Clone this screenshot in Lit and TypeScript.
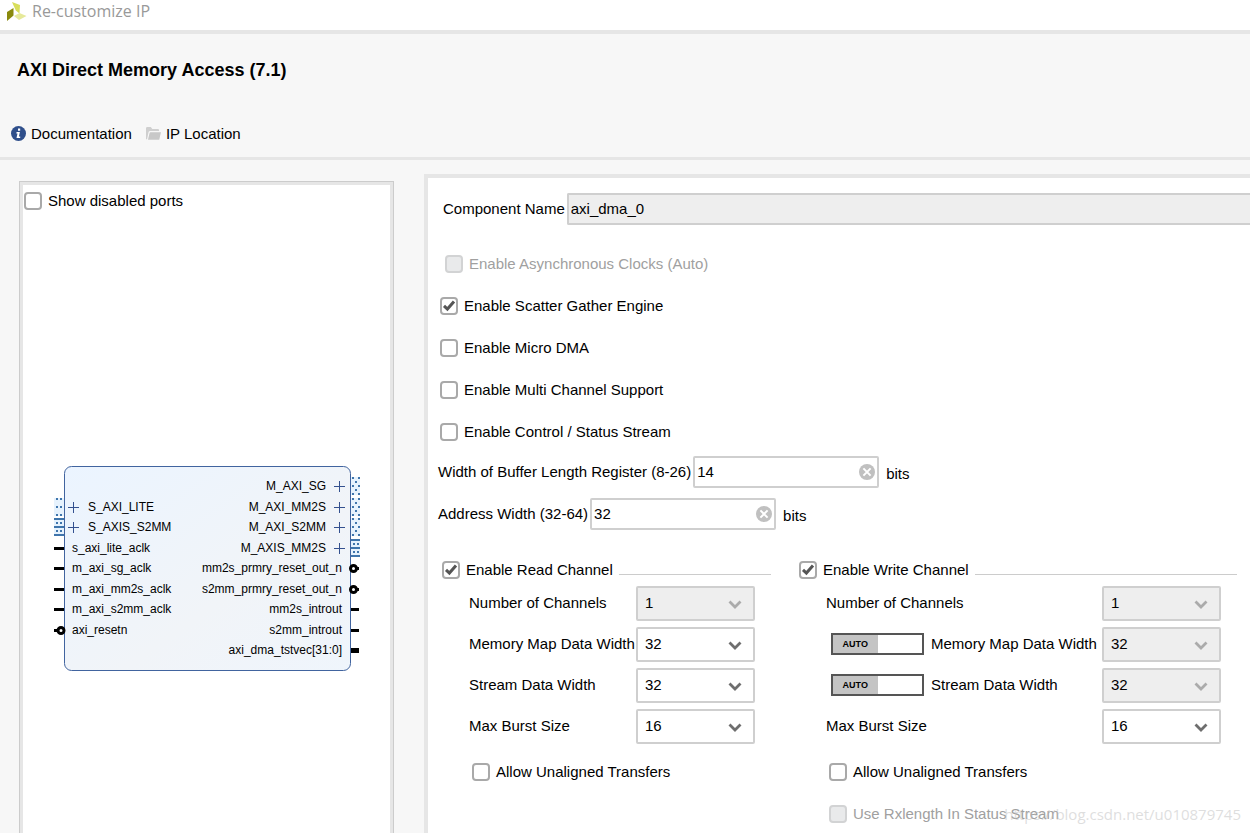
import { LitElement, html, svg, css, nothing } from "lit";
import { customElement, property, state } from "lit/decorators.js";

const sharedText = css`
  :host,
  input,
  select,
  button {
    font-family: "Liberation Sans", Arial, sans-serif;
    font-size: 15px;
    line-height: 18px;
    color: #000;
  }
`;

/* Tick box with its label. */
@customElement("ip-check")
class IpCheck extends LitElement {
  @property() label = "";
  @property({ type: Boolean }) checked = false;
  @property({ type: Boolean }) disabled = false;

  static styles = [
    sharedText,
    css`
      :host {
        display: flex;
      }
      .row {
        display: flex;
        align-items: center;
        gap: 6px;
        white-space: nowrap;
      }
      .row.off {
        color: #a0a0a0;
      }
      .box {
        display: grid;
        width: 18px;
        height: 18px;
      }
      .box > * {
        grid-area: 1 / 1;
      }
      input {
        appearance: none;
        box-sizing: border-box;
        width: 18px;
        height: 18px;
        margin: 0;
        border: 2px solid #a9a9a9;
        border-radius: 4px;
        background: #fff;
      }
      input:disabled {
        border-color: #d2d3d4;
        background: #e9eaeb;
      }
      svg {
        pointer-events: none;
      }
    `,
  ];

  private toggle(e: Event) {
    this.checked = (e.target as HTMLInputElement).checked;
  }

  render() {
    return html`<label class="row ${this.disabled ? "off" : ""}">
      <span class="box">
        <input type="checkbox" .checked=${this.checked} ?disabled=${this.disabled} @change=${this.toggle} />
        ${this.checked
          ? html`<svg width="18" height="18" viewBox="0 0 18 18">
              <path d="M4 8.9 L7.4 12.1 L14 4.6" fill="none" stroke="#555" stroke-width="3" />
            </svg>`
          : nothing}
      </span>
      <span>${this.label}</span>
    </label>`;
  }
}

/* Labelled drop-down, optionally led by an AUTO switch. */
@customElement("ip-choice")
class IpChoice extends LitElement {
  @property() label = "";
  @property() value = "";
  @property({ type: Boolean }) disabled = false;
  @property({ type: Boolean }) auto = false;

  static styles = [
    sharedText,
    css`
      :host {
        display: flex;
        align-items: center;
        justify-content: space-between;
      }
      .lead {
        display: flex;
        align-items: center;
        gap: 7px;
        padding-bottom: 1px;
        white-space: nowrap;
      }
      .switch {
        box-sizing: border-box;
        display: flex;
        width: 93px;
        height: 22px;
        margin-left: 5px;
        padding: 0;
        border: 2px solid #555;
        background: #fff;
      }
      .knob {
        width: 50%;
        height: 100%;
        background: #c4c4c4;
        font-size: 9px;
        line-height: 18px;
        font-weight: bold;
        text-align: center;
      }
      .pick {
        display: grid;
        align-items: center;
        width: 119px;
      }
      .pick > * {
        grid-area: 1 / 1;
      }
      select {
        appearance: none;
        box-sizing: border-box;
        width: 100%;
        height: 35px;
        padding: 0 30px 1px 7px;
        border: 2px solid #cfcfcf;
        border-radius: 2px;
        background: #fff;
      }
      select:disabled {
        background: #eee;
        opacity: 1;
      }
      svg {
        justify-self: end;
        margin-right: 13px;
        pointer-events: none;
      }
    `,
  ];

  render() {
    return html`
      <span class="lead">
        ${this.auto
          ? html`<button class="switch" type="button" role="switch" aria-checked="true" aria-label="${this.label} auto">
              <span class="knob">AUTO</span>
            </button>`
          : nothing}
        <label for="pick">${this.label}</label>
      </span>
      <span class="pick">
        <select id="pick" ?disabled=${this.disabled}>
          <option>${this.value}</option>
        </select>
        <svg width="14" height="12" viewBox="0 0 14 12">
          <path d="M1.5 3.5 L7 9 L12.5 3.5" fill="none" stroke=${this.disabled ? "#ababab" : "#6e6e6e"} stroke-width="2.8" />
        </svg>
      </span>
    `;
  }
}

/* Labelled number box with a clear button and a unit. */
@customElement("ip-number")
class IpNumber extends LitElement {
  @property() label = "";
  @property() value = "";

  static styles = [
    sharedText,
    css`
      :host {
        display: flex;
        align-items: center;
        gap: 2px;
        white-space: nowrap;
      }
      .box {
        box-sizing: border-box;
        display: flex;
        align-items: center;
        width: 186px;
        height: 32px;
        padding: 0 2px;
        border: 2px solid #cfcfcf;
        border-radius: 2px;
        background: #fff;
      }
      input {
        flex: 1;
        min-width: 0;
        padding: 0;
        border: 0;
        outline: 0;
        background: none;
      }
      button {
        display: flex;
        padding: 0;
        border: 0;
        background: none;
      }
      .unit {
        padding: 4px 0 0 5px;
      }
    `,
  ];

  private clear() {
    this.value = "";
  }

  render() {
    return html`
      <label for="num">${this.label}</label>
      <span class="box">
        <input id="num" type="text" .value=${this.value} />
        <button type="button" aria-label="Clear" @click=${this.clear}>
          <svg width="16" height="16" viewBox="0 0 16 16">
            <circle cx="8" cy="8" r="8" fill="#c0c0c0" />
            <path d="M4.4 4.4 L11.6 11.6 M11.6 4.4 L4.4 11.6" stroke="#fff" stroke-width="2" />
          </svg>
        </button>
      </span>
      <span class="unit">bits</span>
    `;
  }
}

/* Block symbol: inputs on the left edge, outputs on the right edge. */
type Port = { name: string; y: number; kind: "memory" | "lite" | "stream" | "pin" | "inverted" | "vector" };

const INPUTS: Port[] = [
  { name: "S_AXI_LITE", y: 42, kind: "lite" },
  { name: "S_AXIS_S2MM", y: 62, kind: "stream" },
  { name: "s_axi_lite_aclk", y: 83, kind: "pin" },
  { name: "m_axi_sg_aclk", y: 103, kind: "pin" },
  { name: "m_axi_mm2s_aclk", y: 124, kind: "pin" },
  { name: "m_axi_s2mm_aclk", y: 144, kind: "pin" },
  { name: "axi_resetn", y: 165, kind: "inverted" },
];

const OUTPUTS: Port[] = [
  { name: "M_AXI_SG", y: 21, kind: "memory" },
  { name: "M_AXI_MM2S", y: 42, kind: "memory" },
  { name: "M_AXI_S2MM", y: 62, kind: "memory" },
  { name: "M_AXIS_MM2S", y: 83, kind: "stream" },
  { name: "mm2s_prmry_reset_out_n", y: 103, kind: "inverted" },
  { name: "s2mm_prmry_reset_out_n", y: 124, kind: "inverted" },
  { name: "mm2s_introut", y: 144, kind: "pin" },
  { name: "s2mm_introut", y: 165, kind: "pin" },
  { name: "axi_dma_tstvec[31:0]", y: 185, kind: "vector" },
];

@customElement("ip-symbol")
class IpSymbol extends LitElement {
  static styles = css`
    :host {
      display: block;
    }
    svg {
      display: block;
      margin: 0 auto;
    }
    text {
      font-family: "Liberation Sans", Arial, sans-serif;
      font-size: 12px;
      fill: #000;
    }
    .end {
      text-anchor: end;
    }
    .body {
      stroke: #41649f;
    }
    .wire {
      fill: #3f75ac;
    }
    .halo {
      fill: #e6f2fd;
    }
    .plus {
      fill: none;
      stroke: #34518f;
    }
    .ring {
      fill: #fff;
      stroke: #000;
      stroke-width: 3;
    }
  `;

  private dot(x: number, y: number) {
    return svg`<rect class="wire" x=${x} y=${y} width="2" height="2" />`;
  }

  private stub({ y, kind }: Port, left: boolean) {
    const x = left ? 2 : 299;
    const w = left ? 10 : 9;
    const dx = left ? 4 : 301;
    switch (kind) {
      case "lite":
        return svg`<rect class="halo" x=${x} y=${y - 9} width=${w} height="18" />
          ${[-9, -1, 7].map((d) => [this.dot(dx, y + d), this.dot(dx + 4, y + d)])}`;
      case "memory":
        return svg`<rect class="halo" x=${x} y=${y - 9} width=${w} height="18" />
          ${[-9, -1, 7].map((d) => [this.dot(300, y + d), this.dot(306, y + d)])}
          ${[-5, 3].map((d) => this.dot(303, y + d))}`;
      case "stream":
        return svg`<rect class="halo" x=${x} y=${y - 9} width=${w} height="18" />
          ${[-9, -1, 7].map((d) => svg`<rect class="wire" x=${x} y=${y + d} width=${w} height="2" />`)}
          ${[-5, 3].map((d) => [this.dot(dx, y + d), this.dot(dx + 4, y + d)])}`;
      case "vector":
        return svg`<rect x=${x} y=${y - 2} width=${w - 1} height="5" />`;
      case "inverted":
        return svg`<rect x=${x} y=${y - 1} width=${w - 1} height="3" />
          <circle class="ring" cx=${left ? 9 : 301.5} cy=${y + 0.5} r="3" />`;
      default:
        return svg`<rect x=${x} y=${y - 1} width=${left ? w : w - 1} height="3" />`;
    }
  }

  private port(p: Port, left: boolean) {
    const bus = p.kind === "memory" || p.kind === "lite" || p.kind === "stream";
    const px = left ? 21.5 : 287.5;
    const tx = left ? (bus ? 36 : 20) : bus ? 274 : 290;
    return svg`
      ${this.stub(p, left)}
      ${bus ? svg`<path class="plus" d="M${px - 5.5} ${p.y + 0.5} h11 M${px} ${p.y - 5} v11" />` : nothing}
      <text class=${left ? "" : "end"} x=${tx} y=${p.y + 4}>${p.name}</text>
    `;
  }

  render() {
    return html`<svg width="309" height="207" viewBox="0 0 309 207" role="img" aria-label="AXI DMA block symbol">
      <defs>
        <linearGradient id="fade" x1="0" y1="0" x2="1" y2="1">
          <stop offset="0" stop-color="#ebf4ff" />
          <stop offset="0.6" stop-color="#f1f4f8" />
          <stop offset="1" stop-color="#eff5fc" />
        </linearGradient>
      </defs>
      <rect class="body" x="12.5" y="1.5" width="286" height="204" rx="7" fill="url(#fade)" />
      ${INPUTS.map((p) => this.port(p, true))} ${OUTPUTS.map((p) => this.port(p, false))}
    </svg>`;
  }
}

@customElement("app-root")
class AppRoot extends LitElement {
  @state() private name = "axi_dma_0";

  static styles = [
    sharedText,
    css`
      :host {
        position: relative;
        display: flex;
        flex-direction: column;
        min-height: 100vh;
        overflow: hidden;
        background: #f7f7f7;
      }
      .titlebar {
        box-sizing: border-box;
        display: flex;
        align-items: center;
        gap: 5px;
        height: 34px;
        padding: 0 6px 8px;
        border-bottom: 4px solid #e6e6e6;
        background: #fff;
        font-family: "Open Sans", "Noto Sans", sans-serif;
        font-size: 16px;
        color: #999;
      }
      header {
        padding: 24px 11px 14px;
        border-bottom: 3px solid #e6e6e6;
      }
      h1 {
        margin: 0 0 42px;
        padding-left: 6px;
        font-size: 18px;
        line-height: 24px;
      }
      nav {
        display: flex;
        gap: 14px;
      }
      .link {
        display: flex;
        align-items: center;
        gap: 5px;
        height: 19px;
        color: inherit;
        text-decoration: none;
      }
      .work {
        flex: 1;
        display: grid;
        grid-template-columns: minmax(330px, 375px) minmax(0, 1fr);
        column-gap: 30px;
        padding: 14px 0 0 19px;
      }
      .preview {
        margin-top: 7px;
        border: 1px solid #ccc;
        border-bottom: 0;
        background: #fff;
      }
      .canvas {
        box-sizing: border-box;
        height: 100%;
        border: 3px solid #e6e6e6;
        border-bottom: 0;
        padding: 7px 1px 0;
      }
      ip-symbol {
        margin-top: 255px;
      }
      .options {
        box-sizing: border-box;
        padding: 15px 0 10px 10px;
        border: solid #e6e6e6;
        border-width: 4px 0 0 4px;
        background: #fff;
      }
      .name {
        display: flex;
        align-items: center;
        gap: 2px;
        padding-left: 5px;
        white-space: nowrap;
      }
      .name input {
        box-sizing: border-box;
        flex: 1;
        min-width: 0;
        height: 32px;
        padding: 0 2px 2px;
        border: 2px solid #cfcfcf;
        border-right: 0;
        border-radius: 2px 0 0 2px;
        background: #eee;
      }
      .checks {
        display: grid;
        gap: 24px;
        margin: 30px 0 15px;
        padding-left: 2px;
      }
      .indent {
        padding-left: 5px;
      }
      .numbers {
        display: grid;
        gap: 10px;
      }
      .channels {
        display: grid;
        grid-template-columns: 329px 1fr;
        gap: 28px;
        margin-top: 31px;
        padding: 0 13px 0 4px;
      }
      .heading {
        display: flex;
        gap: 6px;
        margin-bottom: 7px;
      }
      .rule {
        flex: 1;
        height: 1px;
        margin-top: 13px;
        background: #ccc;
      }
      .fields {
        display: grid;
        gap: 6px;
        padding: 0 16px 0 27px;
      }
      .extras {
        display: grid;
        gap: 24px;
        margin-top: 19px;
        padding-left: 30px;
      }
      .mark {
        position: absolute;
        right: 9px;
        bottom: 7px;
        font-family: "Open Sans", "Noto Sans", sans-serif;
        font-size: 15px;
        line-height: 24px;
        color: rgba(190, 190, 190, 0.5);
        pointer-events: none;
      }
    `,
  ];

  render() {
    return html`
      <div class="titlebar">
        <svg width="21" height="21" viewBox="0 0 21 21">
          <path d="M6 1 L14 4 L13.5 12.5 L9.8 9.5 Z" fill="#d8de5a" />
          <path d="M1 11 L7.5 7 L7.5 14.5 L1 20 Z" fill="#8a8a0c" />
          <path d="M8 15 L13.5 12 L20.5 15 L13 19 Z" fill="#e6e99a" />
        </svg>
        <span>Re-customize IP</span>
      </div>

      <header>
        <h1>AXI Direct Memory Access (7.1)</h1>
        <nav>
          <a class="link" href="#documentation">
            <svg width="15" height="15" viewBox="0 0 15 15">
              <circle cx="7.5" cy="7.5" r="7.5" fill="#2f4f8b" />
              <path d="M7 2.5 h2.2 v2.2 h-2.2 Z M5.6 6 h3.3 l-1 4.600 h1.3 v1.4 h-3.700 l1 -4.600 h-1.200 Z" fill="#fff" />
            </svg>
            Documentation
          </a>
          <a class="link" href="#location">
            <svg width="15" height="13" viewBox="0 0 15 13">
              <path d="M0 12 V1.2 Q0 0 1.2 0 H4.8 L6.3 2 H12 Q13 2 13 3 V4 H4.2 Q3 4 2.6 5 L1 12.5 Z" fill="#cfcfcf" />
              <path d="M4.3 5.2 H15 L13.2 12.8 H2 L3.6 5.8 Z" fill="#c8c8c8" />
            </svg>
            IP Location
          </a>
        </nav>
      </header>

      <div class="work">
        <section class="preview">
          <div class="canvas">
            <ip-check label="Show disabled ports"></ip-check>
            <ip-symbol></ip-symbol>
          </div>
        </section>

        <main class="options">
          <div class="name">
            <label for="component">Component Name</label>
            <input id="component" type="text" readonly .value=${this.name} />
          </div>

          <div class="checks">
            <ip-check class="indent" label="Enable Asynchronous Clocks (Auto)" disabled></ip-check>
            <ip-check label="Enable Scatter Gather Engine" checked></ip-check>
            <ip-check label="Enable Micro DMA"></ip-check>
            <ip-check label="Enable Multi Channel Support"></ip-check>
            <ip-check label="Enable Control / Status Stream"></ip-check>
          </div>

          <div class="numbers">
            <ip-number label="Width of Buffer Length Register (8-26)" value="14"></ip-number>
            <ip-number label="Address Width (32-64)" value="32"></ip-number>
          </div>

          <div class="channels">
            <section>
              <div class="heading">
                <ip-check label="Enable Read Channel" checked></ip-check>
                <span class="rule"></span>
              </div>
              <div class="fields">
                <ip-choice label="Number of Channels" value="1" disabled></ip-choice>
                <ip-choice label="Memory Map Data Width" value="32"></ip-choice>
                <ip-choice label="Stream Data Width" value="32"></ip-choice>
                <ip-choice label="Max Burst Size" value="16"></ip-choice>
              </div>
              <div class="extras">
                <ip-check label="Allow Unaligned Transfers"></ip-check>
              </div>
            </section>
            <section>
              <div class="heading">
                <ip-check label="Enable Write Channel" checked></ip-check>
                <span class="rule"></span>
              </div>
              <div class="fields">
                <ip-choice label="Number of Channels" value="1" disabled></ip-choice>
                <ip-choice label="Memory Map Data Width" value="32" disabled auto></ip-choice>
                <ip-choice label="Stream Data Width" value="32" disabled auto></ip-choice>
                <ip-choice label="Max Burst Size" value="16"></ip-choice>
              </div>
              <div class="extras">
                <ip-check label="Allow Unaligned Transfers"></ip-check>
                <ip-check label="Use Rxlength In Status Stream" disabled></ip-check>
              </div>
            </section>
          </div>
        </main>
      </div>
      <span class="mark">https://blog.csdn.net/u010879745</span>
    `;
  }
}
